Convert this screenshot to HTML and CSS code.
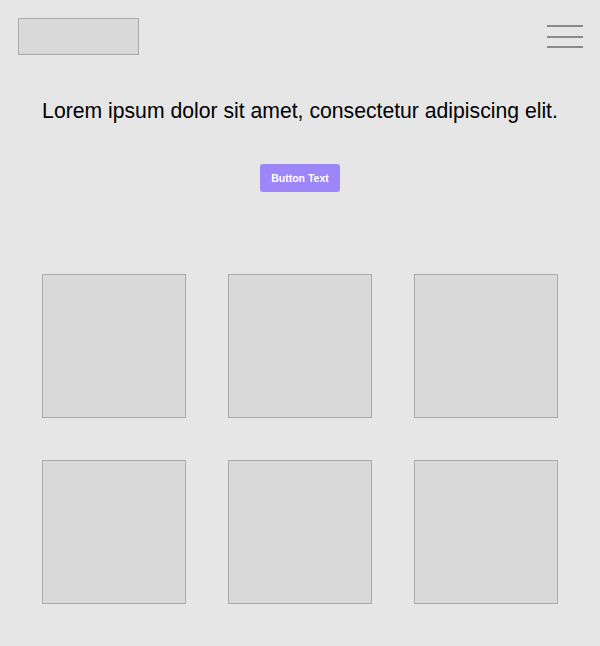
FILE: index.html
```html
<!DOCTYPE html>
<html>
<head>
<meta charset="utf-8">
<link rel="stylesheet" href="styles.css">
</head>
<body>
<header class="header">
  <div class="logo"></div>
  <div class="menu"><span></span><span></span><span></span></div>
</header>
<h1 class="headline">Lorem ipsum dolor sit amet, consectetur adipiscing elit.</h1>
<div class="cta"><button class="btn">Button Text</button></div>
<div class="grid">
  <div class="tile"></div><div class="tile"></div><div class="tile"></div>
  <div class="tile"></div><div class="tile"></div><div class="tile"></div>
</div>
</body>
</html>
```
FILE: styles.css
```css
html, body { margin: 0; padding: 0; }
body {
  background: #e6e6e6;
  font-family: "Liberation Sans", Arial, sans-serif;
  width: 600px;
  height: 646px;
  overflow: hidden;
}
.header {
  display: flex;
  justify-content: space-between;
  align-items: flex-start;
  padding: 18px 17px 0 18px;
}
.logo {
  width: 119px;
  height: 35px;
  background: #d9d9d9;
  border: 1px solid #aaaaaa;
}
.menu {
  display: flex;
  flex-direction: column;
  gap: 8.5px;
  padding-top: 7px;
}
.menu span {
  display: block;
  width: 36px;
  height: 2px;
  background: #8a8a8a;
}
.headline {
  margin: 41px 0 0;
  text-align: center;
  font-weight: normal;
  font-size: 21.2px;
  line-height: 30px;
  color: #000;
}
.cta {
  display: flex;
  justify-content: center;
  margin-top: 38px;
}
.btn {
  width: 80px;
  height: 28px;
  border: none;
  border-radius: 3px;
  background: #9d86f7;
  color: #fff;
  font-family: "Liberation Sans", Arial, sans-serif;
  font-weight: bold;
  font-size: 10.5px;
  padding: 0;
}
.grid {
  display: grid;
  grid-template-columns: repeat(3, 144px);
  gap: 42px;
  justify-content: center;
  margin-top: 82px;
}
.tile {
  height: 142px;
  background: #d9d9d9;
  border: 1px solid #aaaaaa;
}
```
